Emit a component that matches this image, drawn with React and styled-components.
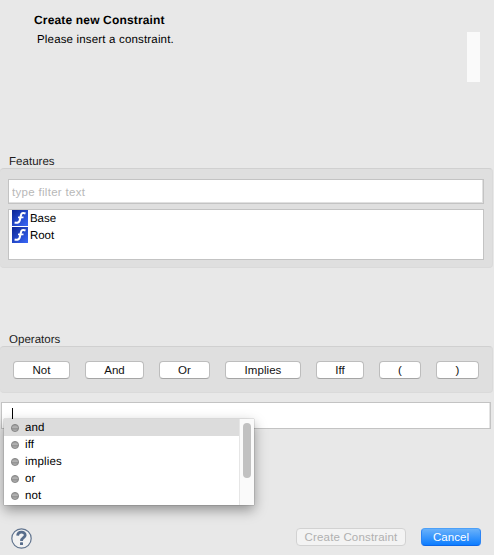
import React from 'react';
import styled, { createGlobalStyle, css } from 'styled-components';

const GlobalStyle = createGlobalStyle`
  * { box-sizing: border-box; }
  body {
    margin: 0;
    background: #e8e8e8;
    color: #000;
    font: 11.5px/14px "Liberation Sans", Arial, sans-serif;
    letter-spacing: 0;
    text-rendering: geometricPrecision;
    overflow: hidden;
  }
`;

const Dialog = styled.main`
  display: flex;
  flex-direction: column;
  width: 494px;
  height: 555px;
  background: #e8e8e8;
`;

const Header = styled.header`
  display: flex;
  justify-content: space-between;
  height: 154px;
  padding: 13px 14px 0 34px;
`;

const Title = styled.h1`
  margin: 0;
  font-size: 12px;
  line-height: 14px;
  font-weight: bold;
  letter-spacing: 0.16px;
`;

const Message = styled.p`
  margin: 6px 0 0 3px;
  letter-spacing: 0.17px;
`;

const Banner = styled.div`
  width: 13px;
  height: 50px;
  margin-top: 19px;
  background: #fafafa;
`;

const Section = styled.section`
  margin-bottom: ${(p) => p.$gap}px;
`;

const Label = styled.h2`
  margin: 0 0 0 9px;
  height: 14px;
  font-size: 11.5px;
  font-weight: normal;
  line-height: 16px;
  color: #1c1c1c;
  letter-spacing: 0.03px;
`;

const Group = styled.div`
  width: 493px;
  height: ${(p) => p.$height}px;
  background: #dfdfdf;
  border: 1px solid #dadada;
  border-top-color: #d0d0d0;
  border-left: 0;
  border-radius: 4px;
`;

const FeatureGroup = styled(Group)`
  display: flex;
  flex-direction: column;
  gap: 5px;
  padding: 10px 8px 0;
`;

const field = css`
  background: #fff;
  border: 1px solid #c3c3c3;
  border-radius: 0;
  outline: none;
  font: inherit;
  letter-spacing: inherit;
`;

const FilterInput = styled.input`
  ${field}
  width: 476px;
  height: 25px;
  padding: 1px 3px 0;
  box-shadow: inset -1px -1px #e0e0e0;
  letter-spacing: 0.3px;
  &::placeholder { color: #b8b8b8; opacity: 1; }
`;

const FeatureList = styled.ul`
  ${field}
  width: 476px;
  height: 51px;
  margin: 0;
  padding: 0 3px;
  list-style: none;
`;

const FeatureRow = styled.li`
  display: flex;
  align-items: flex-start;
  gap: 2px;
  height: 17px;
  line-height: 18px;
  letter-spacing: -0.05px;
`;

const FeatureSvg = styled.svg`
  display: block;
  width: 16px;
  height: 16px;
`;

const OperatorGroup = styled(Group)`
  display: flex;
  gap: 15px;
  padding: 14px 13px 0;
`;

const Button = styled.button`
  width: ${(p) => p.$width}px;
  height: 18px;
  padding: 0;
  border: 1px solid #bdbdbd;
  border-bottom-color: #a5a5a5;
  border-radius: 4px;
  background: #fff;
  color: #111;
  font: inherit;
  line-height: 15px;
  letter-spacing: 0.05px;
`;

const DisabledButton = styled(Button)`
  background: #f3f3f3;
  border-color: #d2d2d2;
  color: #b0b0b0;
  letter-spacing: 0.16px;
`;

const PrimaryButton = styled(Button)`
  border-color: #4ca0f8 #2c84f4 #0b66e8;
  background: linear-gradient(#69b1fa, #0d7dff);
  color: #fff;
`;

const Editor = styled.div`
  ${field}
  position: relative;
  width: 490px;
  height: 27px;
  margin-left: 1px;
  padding: 5px 0 0 10px;
  box-shadow: inset -1px 0 #e4e4e4;
`;

const Caret = styled.span`
  display: block;
  width: 1px;
  height: 14px;
  background: #000;
`;

const Suggestions = styled.div`
  position: absolute;
  left: 2px;
  top: 16px;
  display: flex;
  width: 250px;
  height: 86px;
  background: #fff;
  box-shadow: 0 0 1px rgba(0, 0, 0, 0.5), 0 5px 12px rgba(0, 0, 0, 0.38);
`;

const Options = styled.ul`
  flex: 1;
  margin: 0;
  padding: 0;
  list-style: none;
`;

const Option = styled.li`
  display: flex;
  align-items: flex-start;
  gap: 6px;
  height: 17px;
  padding-left: 7px;
  line-height: 18px;
  background: ${(p) => (p.$active ? '#dcdcdc' : '#fff')};
  letter-spacing: 0.16px;
`;

const BulletSvg = styled.svg`
  display: block;
  width: 8px;
  height: 8px;
  margin-top: 5px;
`;

const ScrollTrack = styled.div`
  width: 15px;
  padding: 4px 0 0 3px;
  background: #fafafa;
  border-left: 1px solid #e6e6e6;
`;

const ScrollThumb = styled.div`
  width: 8px;
  height: 55px;
  border-radius: 4px;
  background: #c1c1c1;
`;

const Footer = styled.footer`
  display: flex;
  align-items: flex-start;
  gap: 15px;
  margin-top: auto;
  height: 28px;
  padding: 1px 13px 0 11px;
`;

const HelpSvg = styled.svg`
  display: block;
  width: 21px;
  height: 21px;
  margin-right: auto;
`;

const FeatureIcon = () => (
  <FeatureSvg viewBox="0 0 16 16">
    <defs>
      <linearGradient id="feature" x1="0" y1="0" x2="1" y2="1">
        <stop offset="0" stopColor="#0a2494" />
        <stop offset="1" stopColor="#3a68f8" />
      </linearGradient>
    </defs>
    <rect width="16" height="16" fill="url(#feature)" />
    <path d="M13.5 3.4C10.6 2.3 9.4 3.2 8.9 5.4L7.7 10.6C7.2 12.7 5.4 13.2 2.6 12.5" fill="none" stroke="#fff" strokeWidth="2.1" />
    <path d="M6 7.4H11.5" stroke="#fff" strokeWidth="1.7" />
  </FeatureSvg>
);

const Bullet = () => (
  <BulletSvg viewBox="0 0 8 8">
    <defs>
      <linearGradient id="bullet" x1="0" y1="0" x2="0" y2="1">
        <stop offset="0" stopColor="#8f8f8f" />
        <stop offset="0.4" stopColor="#b8b8b8" />
        <stop offset="0.55" stopColor="#949494" />
        <stop offset="1" stopColor="#b4b4b4" />
      </linearGradient>
    </defs>
    <circle cx="4" cy="4" r="3.6" fill="url(#bullet)" stroke="#7c7c7c" strokeWidth="0.8" />
  </BulletSvg>
);

const HelpIcon = () => (
  <HelpSvg viewBox="0 0 21 21">
    <circle cx="10.5" cy="10.5" r="9.7" fill="#f2f2f2" stroke="#62758f" strokeWidth="1.2" />
    <path d="M6.6 7.6C6.9 3.1 14.2 3.1 14.2 7.2C14.2 9.8 10.5 9.6 10.5 12.9" fill="none" stroke="#586d8b" strokeWidth="2.8" />
    <rect x="9" y="14.2" width="3" height="2.8" rx="0.6" fill="#586d8b" />
  </HelpSvg>
);

const operators = [
  ['Not', 57], ['And', 59], ['Or', 51], ['Implies', 76], ['Iff', 48], ['(', 42], [')', 43],
];

const proposals = ['and', 'iff', 'implies', 'or', 'not'];

export default function App() {
  return (
    <Dialog>
      <GlobalStyle />
      <Header>
        <div>
          <Title>Create new Constraint</Title>
          <Message>Please insert a constraint.</Message>
        </div>
        <Banner />
      </Header>
      <Section $gap={64}>
        <Label>Features</Label>
        <FeatureGroup $height={100}>
          <FilterInput placeholder="type filter text" />
          <FeatureList>
            {['Base', 'Root'].map((name) => (
              <FeatureRow key={name}><FeatureIcon />{name}</FeatureRow>
            ))}
          </FeatureList>
        </FeatureGroup>
      </Section>
      <Section $gap={9}>
        <Label>Operators</Label>
        <OperatorGroup $height={47}>
          {operators.map(([name, width]) => (
            <Button key={name} $width={width}>{name}</Button>
          ))}
        </OperatorGroup>
      </Section>
      <Editor>
        <Caret />
        <Suggestions>
          <Options>
            {proposals.map((name, i) => (
              <Option key={name} $active={i === 0}><Bullet />{name}</Option>
            ))}
          </Options>
          <ScrollTrack><ScrollThumb /></ScrollTrack>
        </Suggestions>
      </Editor>
      <Footer>
        <HelpIcon />
        <DisabledButton $width={110} disabled>Create Constraint</DisabledButton>
        <PrimaryButton $width={60}>Cancel</PrimaryButton>
      </Footer>
    </Dialog>
  );
}
